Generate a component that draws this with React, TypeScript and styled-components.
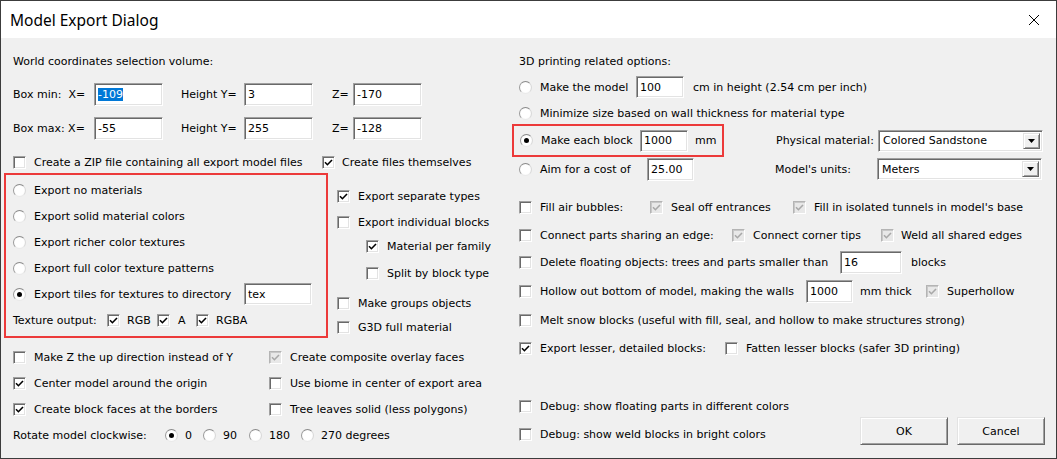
import React from "react";
import styled, { createGlobalStyle } from "styled-components";

const GlobalStyle = createGlobalStyle`
  html, body {
    margin: 0;
    padding: 0;
    background: #f0f0f0;
  }
  body {
    font-family: "DejaVu Sans", Verdana, sans-serif;
    font-size: 11px;
    color: #000;
  }
`;

const Window = styled.div`
  width: 1057px;
  height: 459px;
  box-sizing: border-box;
  border: 1px solid #3c3c3c;
  background: #f0f0f0;
  display: flex;
  flex-direction: column;
  overflow: hidden;
`;

const TitleBar = styled.div`
  height: 37px;
  flex: none;
  background: #fff;
  display: flex;
  align-items: center;
  justify-content: space-between;
  padding: 0 16px 0 9px;
`;

const Title = styled.div`
  font-family: "Noto Sans", "Open Sans", sans-serif;
  font-size: 15.5px;
  color: #000;
`;

const Body = styled.div`
  flex: 1;
  display: grid;
  grid-template-columns: 504px 1fr;
`;

const LeftCol = styled.div`
  padding-left: 12px;
  display: flex;
  flex-direction: column;
`;

const RightCol = styled.div`
  padding: 0 10px 0 14px;
  display: flex;
  flex-direction: column;
`;

const Row = styled.div<{ $h: number; $mt?: number; $ml?: number }>`
  height: ${(p) => p.$h}px;
  margin-top: ${(p) => p.$mt ?? 0}px;
  margin-left: ${(p) => p.$ml ?? 0}px;
  display: flex;
  align-items: center;
  white-space: nowrap;
`;

const Text = styled.span<{ $w?: number; $ml?: number }>`
  flex: none;
  white-space: nowrap;
  margin-left: ${(p) => p.$ml ?? 0}px;
  ${(p) => (p.$w ? `width: ${p.$w}px;` : "")}
`;

const Field = styled.div<{ $w: number; $h?: number }>`
  flex: none;
  width: ${(p) => p.$w}px;
  height: ${(p) => p.$h ?? 23}px;
  box-sizing: border-box;
  background: #fff;
  border: 1px solid;
  border-color: #a0a0a0 #fff #fff #a0a0a0;
  box-shadow: inset 1px 1px 0 #696969, inset -1px -1px 0 #e3e3e3;
  padding: 0 3px;
  display: flex;
  align-items: center;
`;

const Selected = styled.span`
  background: #0078d7;
  color: #fff;
`;

const CheckBox = styled.span<{ $disabled?: boolean }>`
  flex: none;
  width: 13px;
  height: 13px;
  box-sizing: border-box;
  border: 1px solid;
  border-color: ${(p) =>
    p.$disabled ? "#b4b4b4 #fff #fff #b4b4b4" : "#a0a0a0 #fff #fff #a0a0a0"};
  box-shadow: ${(p) =>
    p.$disabled
      ? "inset 1px 1px 0 #c8c8c8"
      : "inset 1px 1px 0 #696969, inset -1px -1px 0 #e3e3e3"};
  background: ${(p) => (p.$disabled ? "#e8e8e8" : "#fff")};
  display: inline-flex;
  align-items: center;
  justify-content: center;
`;

const RadioCircle = styled.span`
  flex: none;
  width: 13px;
  height: 13px;
  box-sizing: border-box;
  border-radius: 50%;
  border: 1px solid;
  border-color: #8a8a8a #d8d8d8 #eaeaea #9a9a9a;
  background: radial-gradient(circle at 50% 50%, #fff 55%, #ececec 100%);
  display: inline-flex;
  align-items: center;
  justify-content: center;
`;

const Dot = styled.span`
  width: 5px;
  height: 5px;
  border-radius: 50%;
  background: #000;
`;

const RedBox = styled.div<{ $w: number; $ml: number; $pl: number }>`
  flex: none;
  box-sizing: border-box;
  width: ${(p) => p.$w}px;
  margin-left: ${(p) => p.$ml}px;
  padding-left: ${(p) => p.$pl}px;
  border: 2px solid #ec3a3a;
`;

const Split = styled.div`
  display: flex;
  margin-top: 1px;
`;

const OptionsBox = styled(RedBox)`
  height: 165px;
  padding-top: 2px;
  display: flex;
  flex-direction: column;
`;

const SideCol = styled.div`
  margin-left: 9px;
  display: flex;
  flex-direction: column;
`;

const BottomGrid = styled.div`
  margin-top: 6px;
  display: grid;
  grid-template-columns: 256px 1fr;
  grid-auto-rows: 26px;
  align-items: center;
`;

const Cell = styled.div`
  display: flex;
  align-items: center;
  white-space: nowrap;
`;

const Wide = styled(Cell)`
  grid-column: 1 / span 2;
`;

const Option = styled.span<{ $w?: number }>`
  flex: none;
  display: inline-flex;
  align-items: center;
  ${(p) => (p.$w ? `width: ${p.$w}px;` : "")}
`;

const SelectBox = styled.div`
  flex: none;
  width: 165px;
  height: 22px;
  box-sizing: border-box;
  background: #fff;
  border: 1px solid;
  border-color: #a0a0a0 #fff #fff #a0a0a0;
  box-shadow: inset 1px 1px 0 #696969, inset -1px -1px 0 #e3e3e3;
  display: flex;
  align-items: center;
  padding: 0 2px 0 4px;
`;

const SelectValue = styled.span`
  flex: 1;
`;

const ArrowButton = styled.span`
  flex: none;
  width: 17px;
  height: 16px;
  box-sizing: border-box;
  background: #f0f0f0;
  border: 1px solid;
  border-color: #e3e3e3 #696969 #696969 #e3e3e3;
  box-shadow: inset 1px 1px 0 #fff, inset -1px -1px 0 #a0a0a0;
  display: flex;
  align-items: center;
  justify-content: center;
`;

const BottomArea = styled.div`
  margin-top: 32px;
  display: flex;
  justify-content: space-between;
`;

const DebugCol = styled.div`
  display: flex;
  flex-direction: column;
`;

const Buttons = styled.div`
  margin-top: 24px;
  margin-right: 1px;
  display: flex;
  gap: 9px;
  align-self: flex-start;
`;

const Button = styled.button`
  width: 88px;
  height: 28px;
  box-sizing: border-box;
  font-family: "DejaVu Sans", Verdana, sans-serif;
  font-size: 11px;
  color: #000;
  background: #f0f0f0;
  border: 1px solid;
  border-color: #e3e3e3 #696969 #696969 #e3e3e3;
  box-shadow: inset 1px 1px 0 #fff, inset -1px -1px 0 #a0a0a0;
  padding: 0;
`;

const Check = ({ checked, disabled }: { checked?: boolean; disabled?: boolean }) => (
  <CheckBox $disabled={disabled}>
    {checked && (
      <svg width="9" height="9" viewBox="0 0 9 9">
        <path
          d="M1 4.3 L3.4 6.7 L8 2"
          fill="none"
          stroke={disabled ? "#a8a8a8" : "#000"}
          strokeWidth="1.6"
        />
      </svg>
    )}
  </CheckBox>
);

const Radio = ({ checked }: { checked?: boolean }) => (
  <RadioCircle>{checked && <Dot />}</RadioCircle>
);

const CloseIcon = () => (
  <svg width="12" height="12" viewBox="0 0 12 12">
    <path d="M1 1 L11 11 M11 1 L1 11" stroke="#000" strokeWidth="1" />
  </svg>
);

const DropArrow = () => (
  <svg width="7" height="4" viewBox="0 0 7 4">
    <path d="M0 0 H7 L3.5 4 Z" fill="#000" />
  </svg>
);

const App = () => {
  return (
    <>
      <GlobalStyle />
      <Window>
        <TitleBar>
          <Title>Model Export Dialog</Title>
          <CloseIcon />
        </TitleBar>
        <Body>
          <LeftCol>
            <Row $h={20} $mt={13}>
              <Text>World coordinates selection volume:</Text>
            </Row>
            <Row $h={24} $mt={11}>
              <Text $w={81}>Box min:&nbsp; X=</Text>
              <Field $w={69}>
                <Selected>-109</Selected>
              </Field>
              <Text $w={63} $ml={18}>Height Y=</Text>
              <Field $w={69}>3</Field>
              <Text $w={21} $ml={19}>Z=</Text>
              <Field $w={69}>-170</Field>
            </Row>
            <Row $h={24} $mt={10}>
              <Text $w={81}>Box max: X=</Text>
              <Field $w={69}>-55</Field>
              <Text $w={63} $ml={18}>Height Y=</Text>
              <Field $w={69}>255</Field>
              <Text $w={21} $ml={19}>Z=</Text>
              <Field $w={69}>-128</Field>
            </Row>
            <Row $h={20} $mt={12}>
              <Check />
              <Text $ml={8} $w={288}>Create a ZIP file containing all export model files</Text>
              <Check checked />
              <Text $ml={7}>Create files themselves</Text>
            </Row>
            <Split>
              <OptionsBox $w={324} $ml={-9} $pl={7}>
                <Row $h={26}>
                  <Radio />
                  <Text $ml={8}>Export no materials</Text>
                </Row>
                <Row $h={26}>
                  <Radio />
                  <Text $ml={8}>Export solid material colors</Text>
                </Row>
                <Row $h={26}>
                  <Radio />
                  <Text $ml={8}>Export richer color textures</Text>
                </Row>
                <Row $h={26}>
                  <Radio />
                  <Text $ml={8}>Export full color texture patterns</Text>
                </Row>
                <Row $h={26}>
                  <Radio checked />
                  <Text $ml={8} $w={210}>Export tiles for textures to directory</Text>
                  <Field $w={68} $h={22}>tex</Field>
                </Row>
                <Row $h={26}>
                  <Text $w={94}>Texture output:</Text>
                  <Option $w={50}>
                    <Check checked />
                    <Text $ml={7}>RGB</Text>
                  </Option>
                  <Option $w={39}>
                    <Check checked />
                    <Text $ml={8}>A</Text>
                  </Option>
                  <Option>
                    <Check checked />
                    <Text $ml={7}>RGBA</Text>
                  </Option>
                </Row>
              </OptionsBox>
              <SideCol>
                <Row $h={20} $mt={13}>
                  <Check checked />
                  <Text $ml={8}>Export separate types</Text>
                </Row>
                <Row $h={20} $mt={6}>
                  <Check />
                  <Text $ml={8}>Export individual blocks</Text>
                </Row>
                <Row $h={20} $mt={4} $ml={29}>
                  <Check checked />
                  <Text $ml={8}>Material per family</Text>
                </Row>
                <Row $h={20} $mt={7} $ml={29}>
                  <Check />
                  <Text $ml={8}>Split by block type</Text>
                </Row>
                <Row $h={20} $mt={10}>
                  <Check />
                  <Text $ml={8}>Make groups objects</Text>
                </Row>
                <Row $h={20} $mt={4}>
                  <Check />
                  <Text $ml={8}>G3D full material</Text>
                </Row>
              </SideCol>
            </Split>
            <BottomGrid>
              <Cell>
                <Check />
                <Text $ml={8}>Make Z the up direction instead of Y</Text>
              </Cell>
              <Cell>
                <Check checked disabled />
                <Text $ml={8}>Create composite overlay faces</Text>
              </Cell>
              <Cell>
                <Check checked />
                <Text $ml={8}>Center model around the origin</Text>
              </Cell>
              <Cell>
                <Check />
                <Text $ml={8}>Use biome in center of export area</Text>
              </Cell>
              <Cell>
                <Check checked />
                <Text $ml={8}>Create block faces at the borders</Text>
              </Cell>
              <Cell>
                <Check />
                <Text $ml={8}>Tree leaves solid (less polygons)</Text>
              </Cell>
              <Wide>
                <Text $w={152}>Rotate model clockwise:</Text>
                <Option $w={38}>
                  <Radio checked />
                  <Text $ml={7}>0</Text>
                </Option>
                <Option $w={46}>
                  <Radio />
                  <Text $ml={7}>90</Text>
                </Option>
                <Option $w={52}>
                  <Radio />
                  <Text $ml={7}>180</Text>
                </Option>
                <Option>
                  <Radio />
                  <Text $ml={7}>270 degrees</Text>
                </Option>
              </Wide>
            </BottomGrid>
          </LeftCol>

          <RightCol>
            <Row $h={20} $mt={13}>
              <Text>3D printing related options:</Text>
            </Row>
            <Row $h={24} $mt={4}>
              <Radio />
              <Text $ml={8} $w={96}>Make the model</Text>
              <Field $w={48} $h={22}>100</Field>
              <Text $ml={9}>cm in height (2.54 cm per inch)</Text>
            </Row>
            <Row $h={22} $mt={3}>
              <Radio />
              <Text $ml={8}>Minimize size based on wall thickness for material type</Text>
            </Row>
            <Row $h={33}>
              <RedBox $w={212} $ml={-7} $pl={6}>
                <Row $h={29}>
                  <Radio checked />
                  <Text $ml={8} $w={99}>Make each block</Text>
                  <Field $w={48} $h={22}>1000</Field>
                  <Text $ml={7}>mm</Text>
                </Row>
              </RedBox>
              <Text $ml={52} $w={102}>Physical material:</Text>
              <SelectBox>
                <SelectValue>Colored Sandstone</SelectValue>
                <ArrowButton>
                  <DropArrow />
                </ArrowButton>
              </SelectBox>
            </Row>
            <Row $h={24}>
              <Radio />
              <Text $ml={8} $w={107}>Aim for a cost of</Text>
              <Field $w={47} $h={23}>25.00</Field>
              <Text $ml={81} $w={102}>Model&apos;s units:</Text>
              <SelectBox>
                <SelectValue>Meters</SelectValue>
                <ArrowButton>
                  <DropArrow />
                </ArrowButton>
              </SelectBox>
            </Row>
            <Row $h={26} $mt={13}>
              <Check />
              <Text $ml={8} $w={110}>Fill air bubbles:</Text>
              <Check checked disabled />
              <Text $ml={8} $w={122}>Seal off entrances</Text>
              <Check checked disabled />
              <Text $ml={8}>Fill in isolated tunnels in model&apos;s base</Text>
            </Row>
            <Row $h={26} $mt={2}>
              <Check />
              <Text $ml={8} $w={192}>Connect parts sharing an edge:</Text>
              <Check checked disabled />
              <Text $ml={8} $w={128}>Connect corner tips</Text>
              <Check checked disabled />
              <Text $ml={7}>Weld all shared edges</Text>
            </Row>
            <Row $h={26} $mt={1}>
              <Check />
              <Text $ml={8} $w={300}>Delete floating objects: trees and parts smaller than</Text>
              <Field $w={62} $h={23}>16</Field>
              <Text $ml={9}>blocks</Text>
            </Row>
            <Row $h={26} $mt={3}>
              <Check />
              <Text $ml={8} $w={266}>Hollow out bottom of model, making the walls</Text>
              <Field $w={47} $h={23}>1000</Field>
              <Text $ml={7} $w={66}>mm thick</Text>
              <Check checked disabled />
              <Text $ml={8}>Superhollow</Text>
            </Row>
            <Row $h={26} $mt={3}>
              <Check />
              <Text $ml={8}>Melt snow blocks (useful with fill, seal, and hollow to make structures strong)</Text>
            </Row>
            <Row $h={26} $mt={2}>
              <Check checked />
              <Text $ml={8} $w={185}>Export lesser, detailed blocks:</Text>
              <Check />
              <Text $ml={8}>Fatten lesser blocks (safer 3D printing)</Text>
            </Row>
            <BottomArea>
              <DebugCol>
                <Row $h={26}>
                  <Check />
                  <Text $ml={8}>Debug: show floating parts in different colors</Text>
                </Row>
                <Row $h={26} $mt={2}>
                  <Check />
                  <Text $ml={8}>Debug: show weld blocks in bright colors</Text>
                </Row>
              </DebugCol>
              <Buttons>
                <Button>OK</Button>
                <Button>Cancel</Button>
              </Buttons>
            </BottomArea>
          </RightCol>
        </Body>
      </Window>
    </>
  );
};

export default App;
